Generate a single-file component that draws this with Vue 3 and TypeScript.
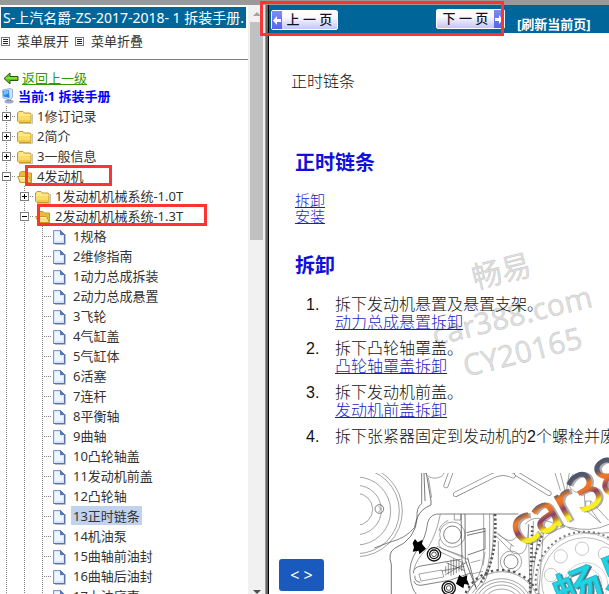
<script setup lang="ts">
import { ref } from 'vue'

interface Node {
  label: string
  level: number
  kind: 'closed' | 'open' | 'page'
  marked?: 'short' | 'long'
}

const pages: string[] = [
  '1规格', '2维修指南', '1动力总成拆装', '2动力总成悬置', '3飞轮', '4气缸盖',
  '5气缸体', '6活塞', '7连杆', '8平衡轴', '9曲轴', '10凸轮轴盖', '11发动机前盖',
  '12凸轮轴', '13正时链条', '14机油泵', '15曲轴前油封', '16曲轴后油封', '17上油底壳',
]

const nodes: Node[] = [
  { label: '1修订记录', level: 0, kind: 'closed' },
  { label: '2简介', level: 0, kind: 'closed' },
  { label: '3一般信息', level: 0, kind: 'closed' },
  { label: '4发动机', level: 0, kind: 'open', marked: 'short' },
  { label: '1发动机机械系统-1.0T', level: 1, kind: 'closed' },
  { label: '2发动机机械系统-1.3T', level: 1, kind: 'open', marked: 'long' },
  ...pages.map((label): Node => ({ label, level: 2, kind: 'page' })),
]

const selected = ref('13正时链条')

const steps = [
  { text: '拆下发动机悬置及悬置支架。', link: '动力总成悬置拆卸' },
  { text: '拆下凸轮轴罩盖。', link: '凸轮轴罩盖拆卸' },
  { text: '拆下发动机前盖。', link: '发动机前盖拆卸' },
  { text: '拆下张紧器固定到发动机的2个螺栓并废', link: '' },
]
</script>

<template>
  <div class="frames">
    <aside class="side">
      <div class="side-body">
        <h1 class="book">S-上汽名爵-ZS-2017-2018- 1 拆装手册.</h1>
        <div class="tools">
          <button type="button" class="tool"><span class="lines"></span>菜单展开</button>
          <button type="button" class="tool"><span class="lines"></span>菜单折叠</button>
        </div>
        <div class="back">
          <svg width="16" height="13" viewBox="0 0 16 13"><path d="M1 6.500 7 1v3.500h8v4H7V12z" fill="#58c810" stroke="#245c08" /><path d="M3 6h11" stroke="#b4f060" /></svg>
          <a href="#">返回上一级</a>
        </div>
        <div class="current">
          <svg width="14" height="16" viewBox="0 0 14 16">
            <ellipse cx="8" cy="13.500" rx="4.500" ry="2" fill="#a3a8c6" />
            <path d="M6 10h4v3H6z" fill="#7e86ac" />
            <path d="M1.500 2 9 .5l2.500 1v8L9 12l-7-2z" fill="#d3e2f6" stroke="#9db4d8" />
            <path d="m2 3 6-1 .5 8-6-1.500z" fill="#1f86ea" />
            <path d="m2.500 3.500 5-1v3L3 7z" fill="#72c2fb" />
          </svg>
          <strong>当前:1 拆装手册</strong>
        </div>
        <ul class="tree">
          <li v-for="(n, i) in nodes" :key="i" class="row">
            <span v-for="g in n.level" :key="g" class="guide"></span>
            <span class="guide joint">
              <button v-if="n.kind !== 'page'" type="button" class="toggle" :class="{ plus: n.kind === 'closed' }" :aria-label="n.label"></button>
            </span>
            <span class="pic">
              <svg v-if="n.kind === 'page'" width="13" height="16" viewBox="0 0 13 16">
                <path d="M2 15.500h10.500V5" fill="none" stroke="#b9bdca" />
                <path d="M.5 1.500h7l4 4v9H.5z" fill="#d3e6fd" stroke="#7f97cc" />
                <path d="M2 3h5v4h3v5H2z" fill="#eef7ff" />
                <path d="M7.500 1.500v4h4z" fill="#5a7cbc" stroke="#5576b6" />
                <path d="M11.500 6v8.500H.5" fill="none" stroke="#5b70a6" />
              </svg>
              <svg v-else-if="n.kind === 'closed'" width="16" height="15" viewBox="0 0 16 15">
                <path d="M2 13.500h13.500V4" fill="none" stroke="#c5c3bb" />
                <path d="M.5 11V3L2 1.500h4L7.500 3H13l1 1v8.500H2z" fill="#fbdc68" stroke="#c39a2c" />
                <path d="M1.500 5h12M2 3h4" stroke="#fff3b1" />
                <path d="M2 10h11v2H2z" fill="#f2c846" />
              </svg>
              <svg v-else width="16" height="15" viewBox="0 0 16 15">
                <path d="M2.500 12V3L4 1.500h4L9.500 3h5v9.500h-11z" fill="#e9bc40" stroke="#c39a2c" />
                <path d="M.5 6.500h11l3 6h-11z" fill="#fbe27b" stroke="#c39a2c" />
                <path d="M2 7.500h9" stroke="#fff5bf" />
              </svg>
            </span>
            <a href="#" class="label" :class="{ selected: selected === n.label }" @click.prevent="selected = n.label">{{ n.label }}</a>
            <span v-if="n.marked" class="mark" :class="n.marked"></span>
          </li>
        </ul>
      </div>
      <div class="scroll" aria-hidden="true">
        <span class="up"></span>
        <span class="thumb"></span>
        <span class="down"></span>
      </div>
    </aside>
    <div class="split"></div>
    <main class="main">
      <nav class="bar">
        <button type="button" class="pager">
          <span class="tab"><svg width="8" height="9" viewBox="0 0 8 9"><path d="M0 4.500 4 0v3h4v3H4v3z" fill="#fff" /></svg></span>
          <span class="caption">上 一 页</span>
        </button>
        <button type="button" class="pager next">
          <span class="caption">下 一 页</span>
          <span class="tab"><svg width="8" height="9" viewBox="0 0 8 9"><path d="M8 4.500 4 0v3H0v3h4v3z" fill="#fff" /></svg></span>
        </button>
        <a href="#" class="refresh">[刷新当前页]</a>
        <span class="mark nav-mark"></span>
      </nav>
      <article class="doc">
        <p class="crumb">正时链条</p>
        <h2>正时链条</h2>
        <p class="toc"><a href="#">拆卸</a><a href="#">安装</a></p>
        <h2>拆卸</h2>
        <ol class="steps">
          <li v-for="(s, i) in steps" :key="i">
            <span class="num">{{ i + 1 }}.</span>
            <div class="step">
              <span>{{ s.text }}</span>
              <a v-if="s.link" href="#">{{ s.link }}</a>
            </div>
          </li>
        </ol>
        <svg class="figure" width="249" height="122" viewBox="285 96 747 366">
          <defs>
            <linearGradient id="fire" gradientUnits="userSpaceOnUse" x1="0" y1="208" x2="0" y2="322">
              <stop offset="0" stop-color="#4d5568" />
              <stop offset=".22" stop-color="#5d5a70" />
              <stop offset=".36" stop-color="#f47a20" />
              <stop offset=".5" stop-color="#e07030" />
              <stop offset=".64" stop-color="#84406e" />
              <stop offset=".78" stop-color="#c08030" />
              <stop offset=".88" stop-color="#f8ef20" />
            </linearGradient>
          </defs>
          <svg x="285" y="96" width="747" height="366" viewBox="285 96 747 366">
            <g fill="none" stroke="#777" stroke-width="2">
              <circle cx="275" cy="210" r="137" /><circle cx="275" cy="210" r="128" />
              <circle cx="275" cy="210" r="102" /><circle cx="275" cy="207" r="74" />
              <circle cx="275" cy="205" r="48" /><circle cx="343" cy="204" r="13" stroke="#444" />
              <path d="M340 194q12 10 0 20" />
              <path d="M470 96v92q-16 12-14 42l-8 30q-25 32-75 44l-45 17" stroke="#444" />
              <path d="M477 96l3 84M484 96l14 84v12q-32 13-41 38-5 65-68 92-22 14-10 48v92" stroke="#333" />
              <path d="M490 110l10 60" />
              <path d="M480 96q12 18 36 15 18-4 21-15" />
              <path d="M760 219H530q-34-3-42 25-5 48-30 80-30 44-22 88 4 32 20 50" stroke="#444" />
              <path d="M526 219q-10 55-35 98-38 38-44 68" />
              <circle cx="562" cy="281" r="38" /><circle cx="562" cy="281" r="26" stroke="#444" />
              <path d="M568 219v18h20v-18M522 270q4-22 28-32M524 294q-8 22 10 30l62 22" />
              <path d="M588 219l3 136M600 219l1 140 34 86M604 275l56-13v62l-52 18M606 283l54-12M608 350l24 88M590 355l23 92" stroke="#333" />
              <path d="M656 219v125q-5 62-46 108M674 219v125q-5 62-52 112M685 219q4 190-45 225" />
              <path d="M690 219q8 135-42 205" stroke-width="8" stroke-dasharray="6 7" stroke="#555" />
              <path d="M445 397q0-18 22-22l120-20M447 420q4 16 27 12l83-15 60-21M450 404q-3 18 16 20" stroke="#444" />
              <path d="M462 399l69-12 5 21-68 12zM516 316l94 40M520 330l80 38" />
              <path d="M542 376v20m8-30v34m8-44v48m8-52v50m8-48v42m8-38v34m8-28v26M530 390l68-14M544 365l55 24M540 402l66-39" stroke="#555" />
              <path d="M617 365l30-8M617 400l37-9M660 332l-6 42" />
              <path d="M697 276l50 41M694 285l40 42M700 300v84M697 278q28 24 44 20 16-6 18-30M740 310q-17 29 23 29 17-3 22-24l7-65" />
              <circle cx="738" cy="362" r="32" /><circle cx="738" cy="362" r="21" stroke="#444" />
              <circle cx="710" cy="506" r="119" stroke-width="7" stroke-dasharray="7 10" stroke="#555" />
              <circle cx="710" cy="506" r="114" /><circle cx="710" cy="506" r="93" />
              <circle cx="710" cy="506" r="84" /><circle cx="710" cy="506" r="74" /><circle cx="710" cy="506" r="62" />
              <path d="M790 250l5 212M805 240l-7 222M821 270l-25 192M835 275l-14 187" />
              <path d="M802 255l-7 200M838 260l-35 105" stroke-width="8" stroke-dasharray="5 8" stroke="#555" />
              <circle cx="960" cy="420" r="148" stroke-width="6" stroke-dasharray="6 9" stroke="#777" />
              <circle cx="960" cy="420" r="143" stroke="#aaa" /><circle cx="960" cy="420" r="130" stroke="#999" />
              <circle cx="887" cy="346" r="20" stroke="#aaa" /><circle cx="951" cy="323" r="20" stroke="#aaa" />
              <circle cx="858" cy="402" r="20" stroke="#aaa" /><circle cx="1020" cy="338" r="20" stroke="#aaa" />
              <circle cx="963" cy="430" r="65" stroke="#bbb" /><circle cx="963" cy="430" r="48" stroke="#bbb" />
              <path d="M870 96l16 52M886 96l16 60M913 96l-8 48M925 98q-29 36 4 54 36 14 55-18M958 160l3 46 47 40M977 180l54 58M962 180h15v24h-15zM977 204l30 42M908 258q70 18 124-8M886 247q60 40 146 28" />
              <path d="M780 250q18-20 40-18l80 25q-60 16-77 62" />
            </g>
            <g fill="none">
              <path d="M572 160 684 104q30-14 60 0" stroke="#777" stroke-width="16" stroke-linecap="round" />
              <path d="M572 160 684 104q30-14 60 0" stroke="#fff" stroke-width="12" stroke-linecap="round" />
              <path d="M755 98l97 59M543 134l16-44" stroke="#777" stroke-width="15" stroke-linecap="round" />
              <path d="M755 98l97 59M543 134l16-44" stroke="#fff" stroke-width="11" stroke-linecap="round" />
            </g>
            <g fill="#fff" stroke="#111" stroke-width="4">
              <circle cx="507" cy="340" r="20" /><circle cx="507" cy="340" r="13" /><circle cx="507" cy="340" r="7" stroke-width="2" />
              <circle cx="551" cy="441" r="20" /><circle cx="551" cy="441" r="13" /><circle cx="551" cy="441" r="7" stroke-width="2" />
            </g>
            <path d="M450 294l8 10 15-8-2 13 12 14-20 17-2-11-18 3 4-13-4-13zM573 428l10-27 8 8 16-6-2 13 8 15-15-2-3 13z" fill="#000" />
          </svg>
          <g transform="rotate(-29 765 318)" font-family="Noto Sans, sans-serif" font-size="150">
            <text x="770" y="323" fill="#777" stroke="#777" stroke-width="8" opacity=".6">car38</text>
            <text x="765" y="318" fill="url(#fire)" stroke="url(#fire)" stroke-width="7">car38</text>
          </g>
          <g transform="rotate(-22 893 526)" font-family="Noto Sans CJK SC, sans-serif" font-size="146" font-weight="500">
            <text x="898" y="531" fill="#667" stroke="#778" stroke-width="2">畅易</text>
            <text x="893" y="526" fill="#20d4e4" stroke="#20bccc" stroke-width="3">畅易</text>
          </g>
        </svg>
      </article>
      <svg class="watermark" width="180" height="140" viewBox="425 250 180 140" aria-hidden="true">
        <g fill="#000" fill-opacity=".15" stroke="#000" stroke-opacity=".1" font-size="30" font-family="Noto Sans, Noto Sans CJK SC, sans-serif">
          <text transform="translate(475 289) rotate(-14)">畅易</text>
          <text transform="translate(435 346) rotate(-14)">car388.com</text>
          <text transform="translate(466 377) rotate(-14)">CY20165</text>
        </g>
      </svg>
      <button type="button" class="code">&lt; &gt;</button>
    </main>
  </div>
</template>

<style>
body {
  margin: 0;
  background: #fff;
}
</style>

<style scoped>
.frames {
  box-sizing: border-box;
  display: grid;
  grid-template-columns: 265px 4px minmax(0, 1fr);
  grid-template-rows: minmax(0, 1fr);
  height: 100vh;
  padding-top: 5px;
  background: linear-gradient(#999, #999) top / 100% 5px no-repeat;
  overflow: hidden;
  font-family: "Noto Sans", "Noto Sans CJK SC", sans-serif;
  font-size: 13px;
  line-height: 20px;
  color: #333;
}
button {
  font: inherit;
  color: inherit;
  border: 0;
  padding: 0;
  background: none;
  cursor: pointer;
}
.side {
  display: flex;
  min-height: 0;
}
.side-body {
  flex: 1;
  min-width: 0;
  overflow: hidden;
}
.book {
  margin: 2px 2px 0 1px;
  padding: 0 2px;
  background: #069;
  color: #fff;
  font-size: 14px;
  font-weight: 400;
  line-height: 21px;
  white-space: nowrap;
  overflow: hidden;
}
.tools {
  display: flex;
  gap: 6px;
  padding: 3px 1px 8px;
  border-bottom: 1px solid #808080;
}
.tool {
  display: flex;
  align-items: center;
  gap: 7px;
}
.lines {
  box-sizing: border-box;
  width: 9px;
  height: 9px;
  border: 1px solid #777;
  padding: 1px;
  background: repeating-linear-gradient(#222 0 1px, #fff 1px 2px) content-box;
}
.back,
.current {
  display: flex;
  align-items: center;
  gap: 3px;
  line-height: 18px;
}
.back {
  margin-top: 9px;
  padding-left: 3px;
}
.back a {
  color: #390;
}
.current {
  padding-left: 1px;
  color: #00f;
}
.tree {
  margin: 1px 0 0;
  padding: 0;
  list-style: none;
}
.row {
  position: relative;
  display: flex;
  height: 20px;
}
.guide {
  position: relative;
  flex: none;
  width: 18px;
  background: repeating-linear-gradient(#808080 0 1px, transparent 1px 2px) 6px 0 / 1px 100% no-repeat;
}
.joint {
  display: flex;
  align-items: center;
  width: 17px;
  background:
    repeating-linear-gradient(#808080 0 1px, transparent 1px 2px) 6px 0 / 1px 100% no-repeat,
    repeating-linear-gradient(90deg, #808080 0 1px, transparent 1px 2px) 6px 10px / 10px 1px no-repeat;
}
.toggle {
  box-sizing: border-box;
  width: 9px;
  height: 9px;
  margin: 1px 0 0 2px;
  border: 1px solid #808080;
  background: linear-gradient(#000, #000) center / 5px 1px no-repeat #fff;
}
.toggle.plus {
  background:
    linear-gradient(#000, #000) center / 5px 1px no-repeat,
    linear-gradient(#000, #000) center / 1px 5px no-repeat #fff;
}
.pic {
  display: flex;
  align-items: center;
  flex: none;
  width: 18px;
  padding-top: 2px;
}
.label {
  height: 19px;
  padding: 0 2px;
  line-height: 20px;
  color: #333;
  text-decoration: none;
  white-space: nowrap;
}
.selected {
  background: #c1d2ee;
}
.mark {
  position: absolute;
  box-sizing: border-box;
  border: 3px solid #f33;
  pointer-events: none;
}
.short {
  left: 25px;
  top: -1px;
  width: 87px;
  height: 21px;
}
.long {
  left: 37px;
  top: -2px;
  width: 170px;
  height: 22px;
}
.scroll {
  display: flex;
  flex-direction: column;
  align-items: center;
  width: 17px;
  background: #f1f1f1;
}
.up,
.down {
  border: 4px solid transparent;
}
.up {
  margin: 3px 0 6px;
  border-bottom-color: #a3a3a3;
}
.down {
  margin: auto 0 -4px;
  border-top-color: #505050;
}
.thumb {
  width: 13px;
  height: 37%;
  background: #c1c1c1;
}
.split {
  box-sizing: border-box;
  border-left: 1px solid #999;
  border-right: 1px solid #000;
  background: #666;
}
.main {
  position: relative;
  display: flex;
  flex-direction: column;
  min-width: 0;
  min-height: 0;
}
.bar {
  position: relative;
  display: flex;
  flex: none;
  align-items: flex-start;
  height: 28px;
  padding-left: 2px;
  background: #069;
  white-space: nowrap;
}
.pager {
  box-sizing: border-box;
  display: flex;
  flex: none;
  width: 67px;
  height: 20px;
  margin-top: 5px;
  border: 1px solid #fff;
  border-radius: 2px;
  background: linear-gradient(#fff, #fafaff 35%, #c5c5f7);
  color: #112;
  line-height: 17px;
  font-weight: 500;
}
.next {
  width: 69px;
  margin: 4px 0 0 98px;
}
.tab {
  display: flex;
  flex: none;
  align-items: center;
  justify-content: center;
  width: 10px;
  height: 18px;
  background: linear-gradient(#7b8df8, #5a62e8);
}
.caption {
  flex: 1;
  text-align: center;
}
.refresh {
  margin: 9px 0 0 12px;
  color: #fff;
  font-weight: 700;
  text-decoration: none;
}
.nav-mark {
  left: -9px;
  top: -4px;
  width: 244px;
  height: 35px;
}
.doc {
  flex: 1;
  min-height: 0;
  overflow: hidden;
  padding: 39px 0 0 26px;
  font-family: "Liberation Sans", "Noto Sans CJK SC", sans-serif;
  font-size: 16px;
  font-weight: 300;
  line-height: 20px;
  color: #111;
}
.doc a {
  color: #1c1cc8;
}
.crumb {
  margin: 0 0 0 -4px;
}
h2 {
  margin: 58px 0 0;
  color: #1010d8;
  font-size: 20px;
  line-height: 26px;
}
.toc {
  display: flex;
  flex-direction: column;
  align-items: flex-start;
  margin: 17px 0 0;
  font-size: 15px;
  line-height: 16px;
}
.toc + h2 {
  margin-top: 28px;
}
.steps {
  display: flex;
  flex-direction: column;
  gap: 8px;
  margin: 17px 0 0;
  padding: 0 0 0 11px;
  list-style: none;
  line-height: 18px;
  white-space: nowrap;
}
.steps li {
  display: flex;
}
.num {
  flex: none;
  width: 29px;
}
.step {
  display: flex;
  flex-direction: column;
  align-items: flex-start;
}
.figure {
  display: block;
  margin: 27px 0 0 65px;
  overflow: visible;
}
.watermark {
  position: absolute;
  left: 156px;
  top: 245px;
  overflow: visible;
  pointer-events: none;
}
.code {
  position: absolute;
  left: 10px;
  bottom: 3px;
  width: 45px;
  height: 32px;
  border-radius: 3px;
  background: #1a5abf;
  color: #fff;
  font-size: 16px;
}
</style>
